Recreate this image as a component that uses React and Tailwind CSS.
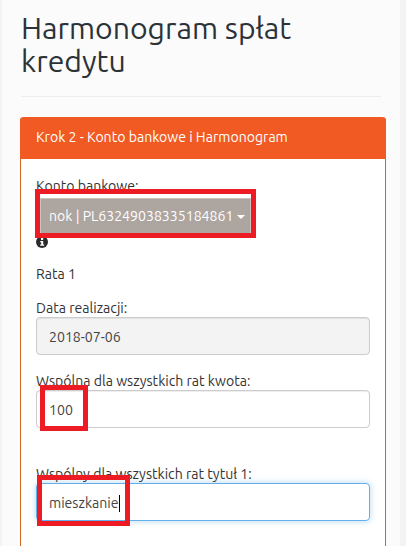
import React from 'react';

const font = "font-['Ubuntu','Noto_Sans','Open_Sans',sans-serif]";

const Field = ({ label, className, children }) => (
  <div className={className}>
    <label className="block text-[14.1px] leading-5 text-[#333] -mb-[1px]">{label}</label>
    {children}
  </div>
);

const RedBox = ({ className }) => (
  <div className={`absolute border-[5px] border-[#ed1c24] pointer-events-none ${className}`}></div>
);

const App = () => {
  return (
    <div className={`relative h-[546px] w-[406px] overflow-hidden bg-[#f3f3f3] px-[2px] ${font}`}>
      <div className="h-full w-[398px] bg-[#fbfbfb] px-[18px] pt-[10px]">
        <h1 className="text-[30.2px] leading-[33px] font-normal text-[#2b3238] pb-[18px] mt-[2px] border-b border-[#eeeeee] mx-[1px]">
          Harmonogram spłat kredytu
        </h1>

        <div className="mt-[20px] w-[366px] rounded-t-[4px] border-x border-[#d2691e] bg-white h-[500px]">
          <div className="-mx-px h-[42px] rounded-t-[4px] bg-[#f15a22] px-4 flex items-center text-[14.1px] text-white">
            Krok 2 - Konto bankowe i Harmonogram
          </div>

          <div className="px-[15px] pt-[17px]">
            <Field label="Konto bankowe:">
              <div className="mt-[3px] ml-[4px] flex h-[39px] w-[211px] items-center gap-1 overflow-hidden bg-[#ada5a0] border border-[#c9c3bf] pl-[8px] pb-[2px] text-[14.1px] text-white">
                <span className="whitespace-nowrap">nok | PL63249038335184861</span>
                <span className="h-0 w-0 border-x-[4px] border-t-[4px] border-x-transparent border-t-white"></span>
              </div>
            </Field>

            <svg className="-mt-[1px]" width="12" height="12" viewBox="0 0 12 12">
              <circle cx="6" cy="6" r="6" fill="#2b2b2b" />
              <rect x="5" y="2" width="2.2" height="2" fill="#fff" />
              <path d="M4.2 5h3v3.6h1v1.2H4.2V8.6h1V6.2h-1z" fill="#fff" />
            </svg>

            <p className="mt-[16px] text-[14.1px] leading-5 text-[#333]">Rata 1</p>

            <Field label="Data realizacji:" className="mt-[14px]">
              <div className="flex h-[38px] items-center rounded-[4px] border border-[#ccc] bg-[#f3f3f3] px-3 pt-[3px] text-[14.1px] text-[#444] shadow-[inset_0_1px_1px_rgba(0,0,0,0.075)]">
                2018-07-06
              </div>
            </Field>

            <Field label="Wspólna dla wszystkich rat kwota:" className="mt-[16px]">
              <div className="flex h-[38px] items-center rounded-[4px] border border-[#ccc] bg-white px-3 pt-[3px] text-[14.1px] text-[#444] shadow-[inset_0_1px_1px_rgba(0,0,0,0.075)]">
                100
              </div>
            </Field>

            <Field label="Wspólny dla wszystkich rat tytuł 1:" className="mt-[36px]">
              <div className="flex h-[38px] items-center rounded-[4px] border border-[#66afe9] bg-white px-3 pt-[3px] text-[14.1px] text-[#444] shadow-[0_0_6px_rgba(102,175,233,0.5)]">
                mieszkanie
                <span className="h-[17px] w-px bg-black"></span>
              </div>
            </Field>
          </div>
        </div>
      </div>

      <RedBox className="left-[35px] top-[189px] h-[49px] w-[221px]" />
      <RedBox className="left-[40px] top-[385px] h-[46px] w-[48px]" />
      <RedBox className="left-[37px] top-[475px] h-[51px] w-[93px]" />
    </div>
  );
};

export default App;
